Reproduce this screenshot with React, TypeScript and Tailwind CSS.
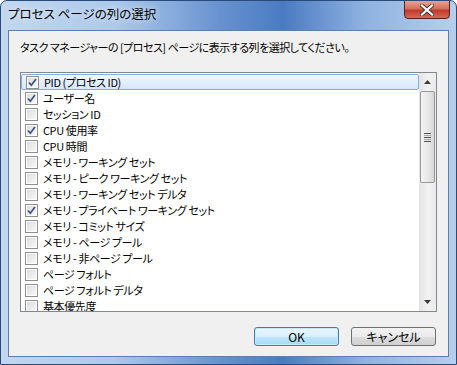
import React from "react";

const items: [string, boolean][] = [
  ["PID (プロセス ID)", true],
  ["ユーザー名", true],
  ["セッション ID", false],
  ["CPU 使用率", true],
  ["CPU 時間", false],
  ["メモリ - ワーキング セット", false],
  ["メモリ - ピーク ワーキング セット", false],
  ["メモリ - ワーキング セット デルタ", false],
  ["メモリ - プライベート ワーキング セット", true],
  ["メモリ - コミット サイズ", false],
  ["メモリ - ページ プール", false],
  ["メモリ - 非ページ プール", false],
  ["ページ フォルト", false],
  ["ページ フォルト デルタ", false],
  ["基本優先度", false],
];

function Check({ on }: { on: boolean }) {
  return (
    <div className="w-[13px] h-[13px] shrink-0 border border-[#8f8f8f] bg-white p-[1px]">
      <div className="w-full h-full bg-gradient-to-br from-[#dcdcdc] to-[#f8f8f8] flex items-center justify-center">
        {on && (
          <svg width="9" height="9" viewBox="0 0 9 9">
            <path d="M1 4.5 L3.3 7.2 L8 1" fill="none" stroke="#3b4f86" strokeWidth="1.7" />
          </svg>
        )}
      </div>
    </div>
  );
}

export default function App() {
  const font = "font-['Noto_Sans_CJK_JP','Noto_Sans',sans-serif] [font-feature-settings:'palt']";
  return (
    <div className={`w-[457px] h-[365px] overflow-hidden rounded-t-[7px] border border-[#2a4a7a] bg-[linear-gradient(to_right,#c2d7ef_0%,#adc9eb_25%,#6892cf_48%,#4a7bc2_62%,#8fb2e0_80%,#b7cfec_100%)] flex flex-col ${font}`}>
      <div className="h-[29px] flex items-start shrink-0">
        <div className="pl-[7px] pt-[4px] text-[12.5px] leading-[18px] text-black [text-shadow:0_0_6px_rgba(255,255,255,0.9)]">
          プロセス ページの列の選択
        </div>
        <div className="flex-1" />
        <div className="mr-[6px] w-[46px] h-[19px] -mt-px rounded-b-[4px] border border-[#5a2020] bg-[linear-gradient(to_bottom,#e8a195_0%,#d2705f_45%,#c0392b_55%,#d76a55_100%)] flex items-center justify-center">
          <svg width="14" height="12" viewBox="0 0 14 12">
            <path d="M2 1.5 L12 10.5 M12 1.5 L2 10.5" stroke="#3a3a3a" strokeWidth="4" strokeLinecap="square" />
            <path d="M2 1.5 L12 10.5 M12 1.5 L2 10.5" stroke="#ffffff" strokeWidth="2.2" strokeLinecap="square" />
          </svg>
        </div>
      </div>
      <div className="mx-[7px] mb-[7px] flex-1 border border-[#5a7fb0] bg-[#f0f0f0] flex flex-col">
        <div className="pl-[11px] pt-[8px] h-[41px] text-[11px] leading-[16px] tracking-[-0.5px] text-black whitespace-nowrap">
          タスク マネージャーの [プロセス] ページに表示する列を選択してください。
        </div>
        <div className="ml-[11px] w-[417px] h-[240px] border border-[#828790] bg-white flex overflow-hidden">
          <div className="flex-1 flex flex-col pt-[1px] overflow-hidden">
            {items.map(([label, on], i) => (
              <div
                key={i}
                className={`h-[16px] shrink-0 flex items-center pl-[4px] gap-[5px] text-[11px] leading-[16px] text-black ${
                  i === 0
                    ? "rounded-[2px] border border-[#84acdd] bg-gradient-to-b from-[#f1f7fe] to-[#d6e7fc] pl-[3px]"
                    : ""
                }`}
              >
                <Check on={on} />
                <span className="whitespace-nowrap tracking-[-0.4px]">{label}</span>
              </div>
            ))}
          </div>
          <div className="w-[17px] shrink-0 flex flex-col bg-gradient-to-r from-[#e3e3e3] via-[#f2f2f2] to-[#ebebeb]">
            <div className="h-[18px] flex items-center justify-center">
              <svg width="7" height="4" viewBox="0 0 7 4">
                <path d="M3.5 0 L7 4 L0 4 Z" fill="#3c3c3c" />
              </svg>
            </div>
            <div className="h-[92px] mx-[1px] rounded-[2px] border border-[#989898] bg-gradient-to-r from-[#f4f4f4] via-[#e8e8e8] to-[#d6d6d6] flex flex-col items-center justify-center gap-[1px]">
              <div className="w-[7px] h-[1px] bg-[#555]" />
              <div className="w-[7px] h-[1px] bg-[#aaa]" />
              <div className="w-[7px] h-[1px] bg-[#555]" />
              <div className="w-[7px] h-[1px] bg-[#aaa]" />
              <div className="w-[7px] h-[1px] bg-[#555]" />
            </div>
            <div className="flex-1" />
            <div className="h-[18px] flex items-center justify-center">
              <svg width="7" height="4" viewBox="0 0 7 4">
                <path d="M0 0 L7 0 L3.5 4 Z" fill="#3c3c3c" />
              </svg>
            </div>
          </div>
        </div>
        <div className="flex justify-end gap-[12px] pr-[12px] pt-[15px]">
          <div className="w-[85px] h-[19px] rounded-[3px] border border-[#3c7fb1] bg-[linear-gradient(to_bottom,#eaf6fd_0%,#d9f0fc_50%,#bee6fd_51%,#a7d9f5_100%)] flex items-center justify-center text-[12px] text-black shadow-[inset_0_0_0_1px_#c5e8fb]">
            OK
          </div>
          <div className="w-[85px] h-[19px] rounded-[3px] border border-[#707070] bg-[linear-gradient(to_bottom,#f2f2f2_0%,#ebebeb_50%,#dddddd_51%,#cfcfcf_100%)] flex items-center justify-center text-[12px] text-black">
            キャンセル
          </div>
        </div>
      </div>
    </div>
  );
}
